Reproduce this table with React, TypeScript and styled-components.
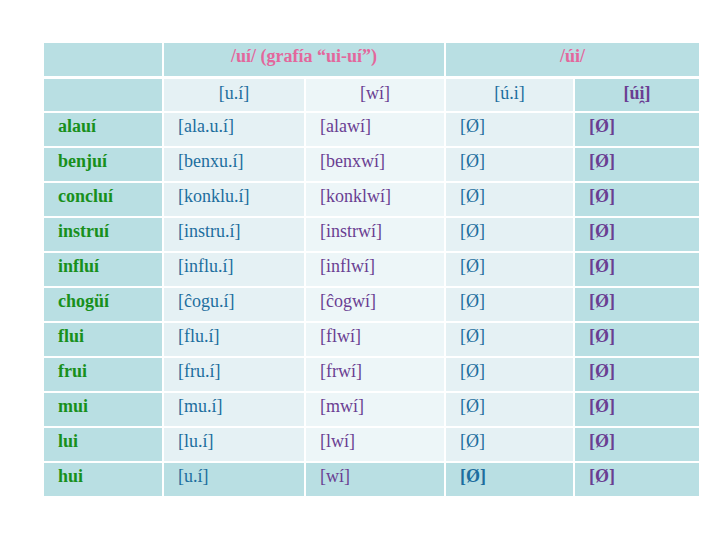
import React from "react";
import styled, { createGlobalStyle } from "styled-components";

const Global = createGlobalStyle`
  html, body { margin: 0; padding: 0; background: #ffffff; }
  body { width: 720px; height: 540px; overflow: hidden; font-family: "Liberation Serif", "Times New Roman", serif; }
`;

const Page = styled.div`
  padding: 43px 0 0 44px;
`;

const Grid = styled.div`
  display: grid;
  grid-template-columns: 118px 140px 138px 127px 124px;
  grid-template-rows: 33px 32px repeat(11, 32.5px);
  column-gap: 2px;
  row-gap: 2.5px;
  width: 655px;
`;

type Tone = "dark" | "light" | "lighter";
const bg: Record<Tone, string> = {
  dark: "#b9dfe3",
  light: "#e5f1f4",
  lighter: "#edf6f8",
};

const Cell = styled.div<{ $tone: Tone; $span?: number }>`
  background: ${(p) => bg[p.$tone]};
  grid-column: span ${(p) => p.$span ?? 1};
  font-size: 18px;
  line-height: 21px;
  padding: 3px 0 0 14px;
  white-space: nowrap;
`;

const HeadCell = styled(Cell)<{ $lift?: number }>`
  display: flex;
  align-items: center;
  justify-content: center;
  padding: 0 0 ${(p) => p.$lift ?? 2}px 0;
`;

type Ink = "green" | "blue" | "purple" | "pink";
const ink: Record<Ink, string> = {
  green: "#18901c",
  blue: "#1d6e9e",
  purple: "#6a3e92",
  pink: "#e3679c",
};

const Txt = styled.span<{ $ink: Ink; $bold?: boolean }>`
  color: ${(p) => ink[p.$ink]};
  font-weight: ${(p) => (p.$bold ? 700 : 400)};
`;

const rows: [string, string, string][] = [
  ["alauí", "[ala.u.í]", "[alawí]"],
  ["benjuí", "[benxu.í]", "[benxwí]"],
  ["concluí", "[konklu.í]", "[konklwí]"],
  ["instruí", "[instru.í]", "[instrwí]"],
  ["influí", "[influ.í]", "[inflwí]"],
  ["chogüí", "[ĉogu.í]", "[ĉogwí]"],
  ["flui", "[flu.í]", "[flwí]"],
  ["frui", "[fru.í]", "[frwí]"],
  ["mui", "[mu.í]", "[mwí]"],
  ["lui", "[lu.í]", "[lwí]"],
  ["hui", "[u.í]", "[wí]"],
];

export default function App() {
  return (
    <>
      <Global />
      <Page>
        <Grid>
          <HeadCell $tone="dark" $lift={6} />
          <HeadCell $tone="dark" $span={2} $lift={6}>
            <Txt $ink="pink" $bold>/uí/ (grafía “ui-uí”)</Txt>
          </HeadCell>
          <HeadCell $tone="dark" $span={2} $lift={6}>
            <Txt $ink="pink" $bold>/úi/</Txt>
          </HeadCell>

          <HeadCell $tone="dark" $lift={3} />
          <HeadCell $tone="light" $lift={3}>
            <Txt $ink="blue">[u.í]</Txt>
          </HeadCell>
          <HeadCell $tone="lighter" $lift={3}>
            <Txt $ink="purple">[wí]</Txt>
          </HeadCell>
          <HeadCell $tone="light" $lift={3}>
            <Txt $ink="blue">[ú.i]</Txt>
          </HeadCell>
          <HeadCell $tone="dark" $lift={3}>
            <Txt $ink="purple" $bold>[úi̯]</Txt>
          </HeadCell>

          {rows.map(([word, a, b], i) => {
            const last = i === rows.length - 1;
            return (
              <React.Fragment key={word}>
                <Cell $tone="dark">
                  <Txt $ink="green" $bold>{word}</Txt>
                </Cell>
                <Cell $tone={last ? "dark" : "light"}>
                  <Txt $ink="blue">{a}</Txt>
                </Cell>
                <Cell $tone={last ? "dark" : "lighter"}>
                  <Txt $ink="purple">{b}</Txt>
                </Cell>
                <Cell $tone={last ? "dark" : "light"}>
                  <Txt $ink="blue" $bold={last}>[Ø]</Txt>
                </Cell>
                <Cell $tone="dark">
                  <Txt $ink="purple" $bold>[Ø]</Txt>
                </Cell>
              </React.Fragment>
            );
          })}
        </Grid>
      </Page>
    </>
  );
}
